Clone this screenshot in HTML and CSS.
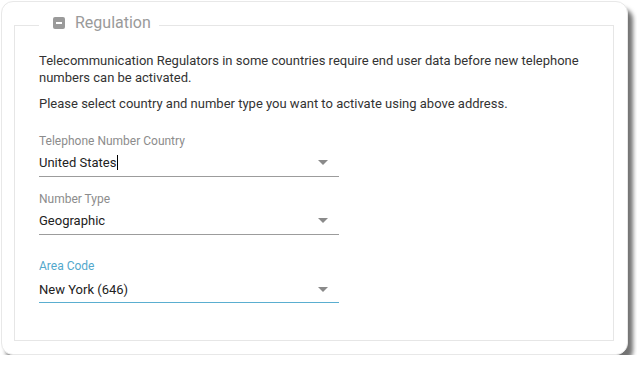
FILE: index.html
```html
<!DOCTYPE html>
<html lang="en">
<head>
    <meta charset="UTF-8">
    <meta name="viewport" content="width=device-width, initial-scale=1.0">
    <title>Regulation</title>
    <link rel="stylesheet" href="styles.css">
</head>
<body>
    <div class="card">
        <fieldset class="section">
            <legend class="section-title">
                <span class="toggle"></span>
                Regulation
            </legend>

            <p class="note">Telecommunication Regulators in some countries require end user data before new telephone numbers can be activated.</p>
            <p class="note">Please select country and number type you want to activate using above address.</p>

            <div class="field">
                <label class="field-label">Telephone Number Country</label>
                <div class="select">
                    <span>United States<span class="caret"></span></span>
                    <span class="arrow"></span>
                </div>
            </div>

            <div class="field">
                <label class="field-label">Number Type</label>
                <div class="select">
                    <span>Geographic</span>
                    <span class="arrow"></span>
                </div>
            </div>

            <div class="field active">
                <label class="field-label">Area Code</label>
                <div class="select">
                    <span>New York (646)</span>
                    <span class="arrow"></span>
                </div>
            </div>
        </fieldset>
    </div>
</body>
</html>
```

FILE: styles.css
```css
body {
    font-family: Roboto, "Liberation Sans", Arial, sans-serif;
    background-color: #fff;
    color: #333;
    margin: 0;
    padding: 1px 0 0 1px;
}
.card {
    width: 600px;
    height: 328px;
    padding: 11px 13px 13px 12px;
    background: #fff;
    border: 1px solid #e8e8e8;
    border-radius: 12px;
    box-shadow: 5px 7px 4px rgba(0, 0, 0, 0.55);
}
.section {
    margin: 0;
    height: 328px;
    padding: 0 24px;
    border: 1px solid #e6e6e6;
    box-sizing: border-box;
}
.section-title {
    display: flex;
    align-items: center;
    gap: 10px;
    padding: 0 8px 4px 14px;
    font-size: 16px;
    line-height: 20px;
    color: #9a9a9a;
}
.toggle {
    position: relative;
    width: 12px;
    height: 12px;
    border-radius: 2px;
    background: #9a9a9a;
}
.toggle::after {
    content: "";
    position: absolute;
    left: 3px;
    top: 5px;
    width: 6px;
    height: 2px;
    background: #fff;
}
.note {
    margin: 15px 0 0;
    font-size: 13px;
    line-height: 17px;
    color: #333;
}
.note + .note {
    margin-top: 9px;
}
.field {
    width: 300px;
    margin-top: 22px;
}
.field + .field {
    margin-top: 15px;
}
.field-label {
    display: block;
    font-size: 12px;
    line-height: 15px;
    color: #8c8c8c;
}
.select {
    display: flex;
    justify-content: space-between;
    align-items: center;
    height: 27px;
    border-bottom: 1px solid #9c9c9c;
    font-size: 13px;
    color: #222;
}
.caret {
    display: inline-block;
    width: 1px;
    height: 15px;
    margin-left: 1px;
    vertical-align: -3px;
    background: #000;
}
.arrow {
    width: 0;
    height: 0;
    margin-right: 11px;
    border-left: 5px solid transparent;
    border-right: 5px solid transparent;
    border-top: 5px solid #8a8a8a;
}
.field.active {
    margin-top: 24px;
}
.active .field-label {
    color: #52a8cc;
}
.active .select {
    padding-top: 3px;
    height: 25px;
    border-bottom-color: #5aaed0;
}
```
